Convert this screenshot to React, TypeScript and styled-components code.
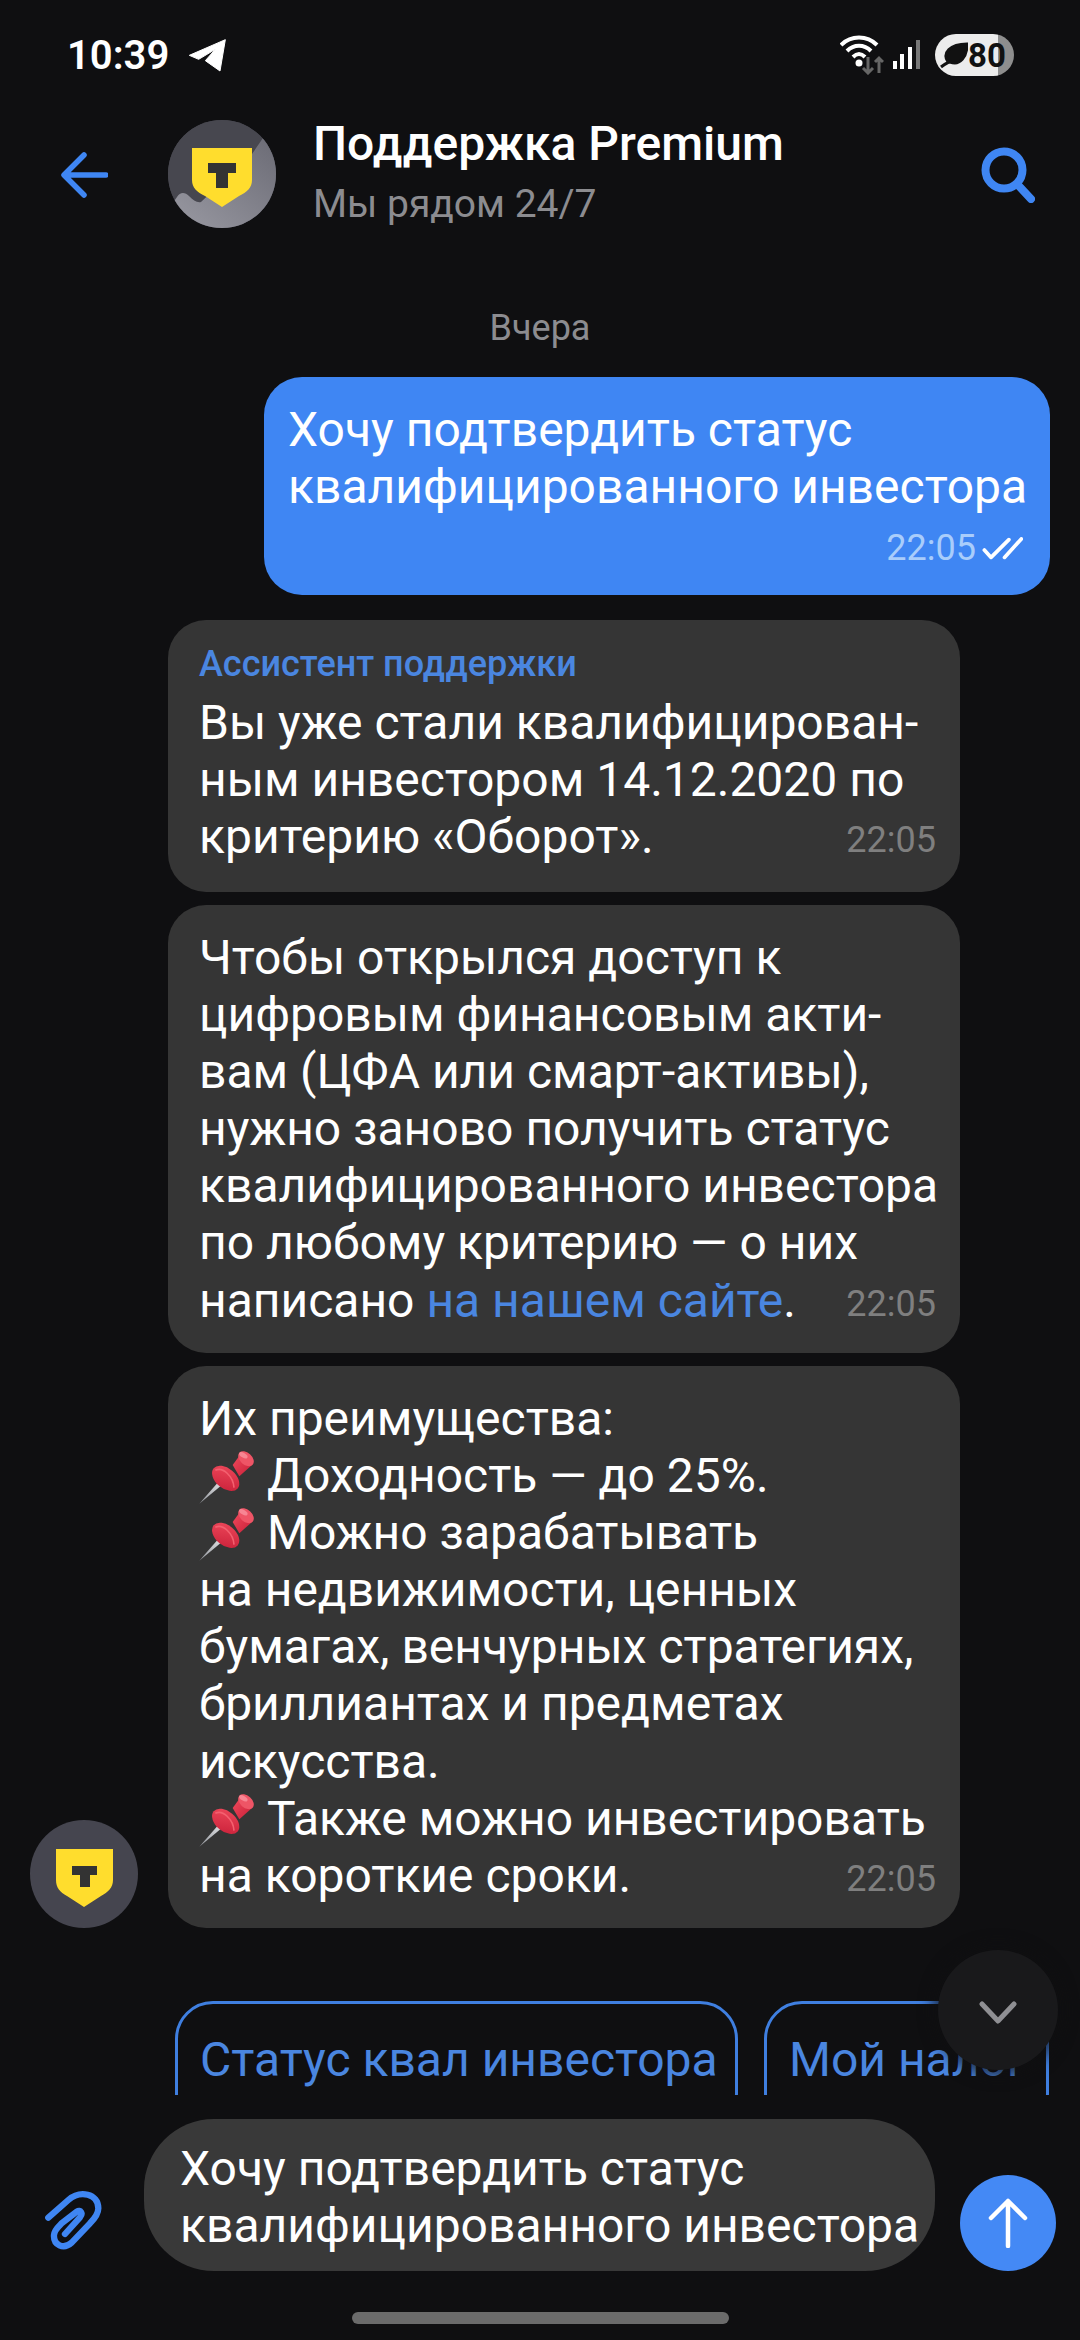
import styled, { createGlobalStyle } from "styled-components";

const GlobalStyle = createGlobalStyle`
  html, body {
    margin: 0;
    padding: 0;
    background: #0f0f11;
  }
  * { box-sizing: border-box; }
`;

const Screen = styled.div`
  position: relative;
  width: 1080px;
  height: 2340px;
  overflow: hidden;
  background: #0f0f11;
  color: #fff;
  font-family: Roboto, "Noto Sans", sans-serif;
  display: flex;
  flex-direction: column;
`;

const StatusBar = styled.div`
  height: 110px;
  padding: 0 66px 0 67px;
  display: flex;
  align-items: center;
  justify-content: space-between;
`;

const StatusLeft = styled.div`
  display: flex;
  align-items: center;
  gap: 18px;
`;

const Clock = styled.span`
  font-size: 40px;
  font-weight: 600;
`;

const StatusRight = styled.div`
  display: flex;
  align-items: center;
`;

const Battery = styled.div`
  width: 79px;
  height: 42px;
  margin-left: 15px;
  border-radius: 21px;
  background: linear-gradient(90deg, #ececec 0 80%, #8e8e8e 80% 100%);
  display: flex;
  align-items: center;
  padding-left: 5px;
  color: #111;
  font-size: 33px;
  font-weight: 700;
`;

const Header = styled.div`
  height: 130px;
  padding: 10px 45px 0 60px;
  display: flex;
  align-items: flex-start;
`;

const BackSlot = styled.div`
  width: 108px;
  height: 109px;
  display: flex;
  align-items: center;
`;

const Avatar = styled.div`
  width: 108px;
  height: 108px;
  flex-shrink: 0;
  border-radius: 50%;
  overflow: hidden;
  background: #45454f;
`;

const HeaderText = styled.div`
  flex: 1;
  margin-left: 37px;
  margin-top: -3px;
`;

const Title = styled.div`
  font-size: 48px;
  font-weight: 500;
  line-height: 54px;
`;

const Subtitle = styled.div`
  font-size: 39px;
  line-height: 50px;
  margin-top: 8px;
  color: #8c8c90;
`;

const SearchSlot = styled.div`
  padding-top: 27px;
`;

const DayLabel = styled.div`
  height: 46px;
  margin-top: 65px;
  text-align: center;
  font-size: 36px;
  line-height: 46px;
  color: #8c8c90;
`;

const Feed = styled.div`
  margin-top: 26px;
  padding: 0 30px;
  display: flex;
  flex-direction: column;
  gap: 13px;
`;

const Outgoing = styled.div`
  align-self: flex-end;
  width: 786px;
  height: 218px;
  margin-bottom: 12px;
  padding: 24px 24px 0;
  border-radius: 38px;
  background: #3f86f3;
`;

const BubbleText = styled.div`
  flex: 1;
  min-width: 0;
  font-size: 48px;
  line-height: 57.1px;
  white-space: nowrap;
`;

const OutgoingMeta = styled.div`
  display: flex;
  justify-content: flex-end;
  align-items: center;
  gap: 6px;
  margin-top: 11px;
  padding-right: 3px;
  font-size: 36px;
  line-height: 44px;
  color: #a9cdfb;
`;

const Row = styled.div`
  display: flex;
  align-items: flex-end;
  padding-left: 138px;
`;

const AvatarSlot = styled.div`
  width: 138px;
  margin-left: -138px;
`;

const Bubble = styled.div<{ $height: number }>`
  width: 792px;
  height: ${(p) => p.$height}px;
  padding: 24px 24px 0 31px;
  border-radius: 38px;
  background: #353535;
  display: flex;
  flex-direction: column;
`;

const Sender = styled.div`
  font-size: 36px;
  font-weight: 500;
  line-height: 40px;
  margin-bottom: 10px;
  color: #4a86e0;
`;

const BubbleBody = styled.div`
  display: flex;
  justify-content: space-between;
  align-items: flex-end;
`;

const Time = styled.span`
  flex-shrink: 0;
  margin-bottom: -4px;
  font-size: 36px;
  line-height: 57px;
  color: #7f7f7f;
`;

const Link = styled.span`
  color: #4a86e0;
`;

const PinIcon = styled.svg`
  width: 80px;
  height: 70px;
  vertical-align: 1px;
  margin: -20px -3px -20px -9px;
`;

const Chips = styled.div`
  height: 94px;
  margin-top: 73px;
  padding-left: 175px;
  overflow: hidden;
  display: flex;
  gap: 26px;
`;

const Chip = styled.div<{ $width: number }>`
  width: ${(p) => p.$width}px;
  height: 130px;
  flex-shrink: 0;
  border: 3px solid #3f7fe0;
  border-radius: 38px;
  padding: 29px 0 0 22px;
  font-size: 48px;
  line-height: 54px;
  color: #4a86e0;
  white-space: nowrap;
  overflow: hidden;
`;

const ScrollDown = styled.div`
  position: absolute;
  left: 938px;
  top: 1950px;
  width: 120px;
  height: 120px;
  padding-top: 6px;
  border-radius: 50%;
  background: #19191b;
  box-shadow: 0 0 14px 6px rgba(15, 15, 17, 0.7);
  display: flex;
  align-items: center;
  justify-content: center;
`;

const Composer = styled.div`
  margin-top: 24px;
  padding: 0 24px 0 45px;
  display: flex;
  align-items: flex-end;
`;

const ClipSlot = styled.div`
  width: 99px;
  height: 70px;
  flex-shrink: 0;
  margin-bottom: 16px;
`;

const InputBox = styled.div`
  width: 791px;
  height: 152px;
  padding: 21px 0 0 36px;
  border-radius: 70px;
  background: #393939;
  font-size: 48px;
  line-height: 57.1px;
  white-space: nowrap;
`;

const SendButton = styled.div`
  width: 96px;
  height: 96px;
  margin-left: 25px;
  border-radius: 50%;
  background: #4489f5;
  display: flex;
  align-items: center;
  justify-content: center;
`;

const HomeBar = styled.div`
  width: 377px;
  height: 12px;
  margin: 41px auto 0;
  border-radius: 6px;
  background: #6b6b6b;
`;

const Pin = () => (
  <PinIcon viewBox="0 0 240 210">
    <defs>
      <linearGradient id="needle" x1="0" y1="1" x2="1" y2="0">
        <stop offset="0" stopColor="#8f9298" />
        <stop offset="1" stopColor="#f2f3f5" />
      </linearGradient>
      <linearGradient id="pinBody" x1="0" y1="0" x2="1" y2="1">
        <stop offset="0" stopColor="#f04a5c" />
        <stop offset="1" stopColor="#c81f38" />
      </linearGradient>
    </defs>
    <path d="M28 188 L98 108 L110 120 Z" fill="url(#needle)" />
    <path d="M128 72 L150 42 L186 72 L148 106 Z" fill="url(#pinBody)" />
    <ellipse cx="107" cy="112" rx="47" ry="30" transform="rotate(40 107 112)" fill="url(#pinBody)" />
    <path d="M76 88 C98 76 130 106 132 140" fill="none" stroke="#f3606f" strokeWidth="5" />
    <ellipse cx="168" cy="53" rx="27" ry="18" transform="rotate(42 168 53)" fill="#ee5566" />
    <ellipse cx="160" cy="43" rx="14" ry="7" transform="rotate(30 160 43)" fill="#f78693" />
  </PinIcon>
);

const Shield = () => (
  <svg width="108" height="108" viewBox="0 0 108 108">
    <path d="M26 29 H83 V60 C83 68 78 72 71 76 L54 87 L37 76 C30 72 26 68 26 60 Z" fill="#ffdd2d" />
    <path d="M42 46 H67 V55 H60 V67 H50 V55 H42 Z" fill="#333" />
  </svg>
);

const ShieldDecorated = () => (
  <svg width="108" height="108" viewBox="0 0 108 108">
    <defs>
      <linearGradient id="swoosh" x1="0" y1="1" x2="1" y2="0">
        <stop offset="0" stopColor="#9a9aa3" />
        <stop offset="1" stopColor="#6b6b75" />
      </linearGradient>
    </defs>
    <rect width="108" height="108" fill="#47474f" />
    <path d="M0 90 L9 77 C12 72 17 72 21 76 C25 80 29 83 33 82 L84 34 L95 18 L108 20 V108 H0 Z" fill="url(#swoosh)" />
    <path d="M24 28 H84 V60 C84 68 79 72 71 76 L54 87 L37 76 C29 72 24 68 24 60 Z" fill="#ffdd2d" />
    <path d="M40 43 H68 V53 H60 V68 H48 V53 H40 Z" fill="#333" />
  </svg>
);

export default function App() {
  return (
    <Screen>
      <GlobalStyle />
      <StatusBar>
        <StatusLeft>
          <Clock>10:39</Clock>
          <svg width="40" height="35" viewBox="405 58 120 105">
            <path d="M412 110 L520 63 L504 157 L460 126 L490 92 L440 122 Z" fill="#fff" stroke="#fff" strokeWidth="3" strokeLinejoin="round" />
          </svg>
        </StatusLeft>
        <StatusRight>
          <svg width="44" height="40" viewBox="0 0 44 40" fill="none">
            <path d="M1 10 C11 0 27 0 37 10 M7 16 C14 9 24 9 31 16 M13 22 C17 18 21 18 25 22" stroke="#fff" strokeWidth="4" />
            <circle cx="19" cy="28" r="3.5" fill="#fff" />
            <path d="M28 22 V38 M23 33 L28 38 L33 33" stroke="#666" strokeWidth="3" />
            <path d="M39 38 V23 M35 27 L39 23 L43 27" stroke="#666" strokeWidth="3" />
          </svg>
          <svg width="27" height="30" viewBox="0 0 27 30" style={{ marginLeft: 9 }}>
            <rect x="0" y="21" width="4" height="8" fill="#fff" />
            <rect x="7" y="14" width="4" height="15" fill="#fff" />
            <rect x="15" y="7" width="4" height="22" fill="#fff" />
            <rect x="23" y="0" width="4" height="29" fill="#777" />
          </svg>
          <Battery>
            <svg width="28" height="28" viewBox="0 0 28 28">
              <path d="M1 26 C6 22 8 22 11 20 M8 21 C2 12 10 3 27 3 C27 16 20 25 10 21" fill="#111" stroke="#111" strokeWidth="3" />
            </svg>
            80
          </Battery>
        </StatusRight>
      </StatusBar>

      <Header>
        <BackSlot>
          <svg width="48" height="46" viewBox="0 0 48 46" fill="none" stroke="#3f86f3" strokeWidth="5.5" strokeLinecap="round" strokeLinejoin="round">
            <path d="M46 23 H5 M24 3 L4 23 L24 43" />
          </svg>
        </BackSlot>
        <Avatar>
          <ShieldDecorated />
        </Avatar>
        <HeaderText>
          <Title>Поддержка Premium</Title>
          <Subtitle>Мы рядом 24/7</Subtitle>
        </HeaderText>
        <SearchSlot>
          <svg width="54" height="56" viewBox="0 0 54 56" fill="none" stroke="#3f86f3" strokeWidth="8" strokeLinecap="round">
            <circle cx="23" cy="23" r="18.5" />
            <path d="M37 38 L50 52" />
          </svg>
        </SearchSlot>
      </Header>

      <DayLabel>Вчера</DayLabel>

      <Feed>
        <Outgoing>
          <BubbleText>
            Хочу подтвердить статус
            <br />
            квалифицированного инвестора
          </BubbleText>
          <OutgoingMeta>
            22:05
            <svg width="41" height="23" viewBox="605 105 122 67" fill="none" stroke="#fff" strokeWidth="11" strokeLinecap="round" strokeLinejoin="round">
              <path d="M612 143 L632 165 L685 112 M672 165 L722 110" />
            </svg>
          </OutgoingMeta>
        </Outgoing>

        <Row>
          <Bubble $height={272}>
            <Sender>Ассистент поддержки</Sender>
            <BubbleBody>
              <BubbleText>
                Вы уже стали квалифицирован-
                <br />
                ным инвестором 14.12.2020 по
                <br />
                критерию «Оборот».
              </BubbleText>
              <Time>22:05</Time>
            </BubbleBody>
          </Bubble>
        </Row>

        <Row>
          <Bubble $height={448}>
            <BubbleBody>
              <BubbleText>
                Чтобы открылся доступ к
                <br />
                цифровым финансовым акти-
                <br />
                вам (ЦФА или смарт-активы),
                <br />
                нужно заново получить статус
                <br />
                квалифицированного инвестора
                <br />
                по любому критерию — о них
                <br />
                написано <Link>на нашем сайте</Link>.
              </BubbleText>
              <Time>22:05</Time>
            </BubbleBody>
          </Bubble>
        </Row>

        <Row>
          <AvatarSlot>
            <Avatar>
              <Shield />
            </Avatar>
          </AvatarSlot>
          <Bubble $height={562}>
            <BubbleBody>
              <BubbleText>
                Их преимущества:
                <br />
                <Pin />
                Доходность — до 25%.
                <br />
                <Pin />
                Можно зарабатывать
                <br />
                на недвижимости, ценных
                <br />
                бумагах, венчурных стратегиях,
                <br />
                бриллиантах и предметах
                <br />
                искусства.
                <br />
                <Pin />
                Также можно инвестировать
                <br />
                на короткие сроки.
              </BubbleText>
              <Time>22:05</Time>
            </BubbleBody>
          </Bubble>
        </Row>
      </Feed>

      <Chips>
        <Chip $width={563}>Статус квал инвестора</Chip>
        <Chip $width={285}>Мой налог</Chip>
      </Chips>

      <Composer>
        <ClipSlot>
          <svg width="70" height="70" viewBox="45 45 210 210" fill="none" stroke="#3f86f3" strokeWidth="19" strokeLinecap="round" strokeLinejoin="round">
            <path d="M55 143 L115 90 C150 60 205 70 205 115 C205 135 190 150 180 160 L125 218 C100 240 70 225 72 195 C73 180 85 170 95 160 L140 125 C152 118 160 130 150 142 L105 192" />
          </svg>
        </ClipSlot>
        <InputBox>
          Хочу подтвердить статус
          <br />
          квалифицированного инвестора
        </InputBox>
        <SendButton>
          <svg width="44" height="50" viewBox="0 0 44 50" fill="none" stroke="#fff" strokeWidth="4.5" strokeLinecap="round" strokeLinejoin="round">
            <path d="M22 48 V3 M5 20 L22 3 L39 20" />
          </svg>
        </SendButton>
      </Composer>

      <HomeBar />

      <ScrollDown>
        <svg width="38" height="24" viewBox="0 0 38 24" fill="none" stroke="#8f8f93" strokeWidth="5" strokeLinecap="round" strokeLinejoin="round">
          <path d="M3 3 L19 20 L35 3" />
        </svg>
      </ScrollDown>
    </Screen>
  );
}
